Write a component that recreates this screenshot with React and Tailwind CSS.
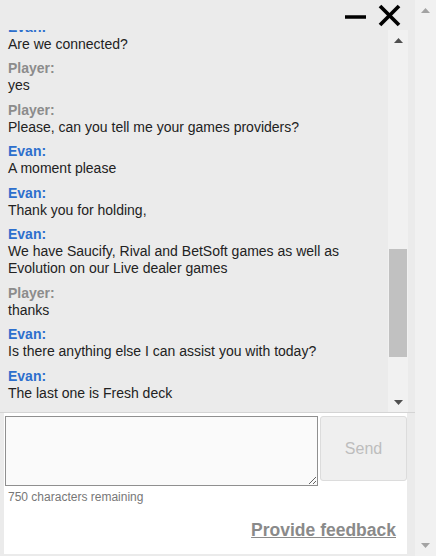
import { useState } from "react";

const messages = [
  { from: "Evan", text: "Are we connected?" },
  { from: "Player", text: "yes" },
  { from: "Player", text: "Please, can you tell me your games providers?" },
  { from: "Evan", text: "A moment please" },
  { from: "Evan", text: "Thank you for holding," },
  {
    from: "Evan",
    text: "We have Saucify, Rival and BetSoft games as well as Evolution on our Live dealer games",
  },
  { from: "Player", text: "thanks" },
  { from: "Evan", text: "Is there anything else I can assist you with today?" },
  { from: "Evan", text: "The last one is Fresh deck" },
  { from: "Evan", text: "Is there anything else?" },
];

function Arrow({ up = true, color = "#505050" }) {
  return (
    <svg width="9" height="5" viewBox="0 0 9 5">
      {up ? (
        <polygon points="0,5 9,5 4.5,0" fill={color} />
      ) : (
        <polygon points="0,0 9,0 4.5,5" fill={color} />
      )}
    </svg>
  );
}

export default function App() {
  const [draft, setDraft] = useState("");

  return (
    <div
      className="flex h-[556px] w-[436px] overflow-hidden bg-[#ebebeb] text-[#222]"
      style={{ fontFamily: '"Liberation Sans", Arial, sans-serif' }}
    >
      <div className="flex w-[415px] flex-col">
        {/* header */}
        <div className="flex h-[30px] items-start justify-end gap-[11px] pr-[14px] pt-[4px]">
          <svg width="23" height="23" viewBox="0 0 23 23">
            <line x1="1" y1="13" x2="22" y2="13" stroke="#000" strokeWidth="3.5" />
          </svg>
          <svg width="23" height="23" viewBox="0 0 23 23">
            <line x1="2" y1="2" x2="21" y2="21" stroke="#000" strokeWidth="3.8" />
            <line x1="21" y1="2" x2="2" y2="21" stroke="#000" strokeWidth="3.8" />
          </svg>
        </div>

        {/* messages */}
        <div className="flex h-[383px] border-b border-[#d4d4d4] pr-[7px]">
          <div className="flex-1 overflow-hidden pl-[8px] pr-[4px]">
            <div className="-mt-[11.5px] flex flex-col gap-[7.5px] text-[14px] leading-[17px]">
              {messages.map((m, i) => (
                <div key={i}>
                  <div
                    className={
                      m.from === "Evan"
                        ? "font-bold text-[#2d6fcd]"
                        : "font-bold text-[#8c8c8c]"
                    }
                  >
                    {m.from}:
                  </div>
                  <div>{m.text}</div>
                </div>
              ))}
            </div>
          </div>
          <div className="flex w-[20px] flex-col items-center bg-[#f1f1f1]">
            <div className="flex h-[20px] items-center justify-center">
              <Arrow up />
            </div>
            <div className="flex-1 w-full px-[1px] pt-[199px]">
              <div className="h-[108px] w-full bg-[#c1c1c1]" />
            </div>
            <div className="flex h-[20px] items-center justify-center">
              <Arrow up={false} />
            </div>
          </div>
        </div>

        {/* composer */}
        <div className="ml-[4px] w-[403px] flex-1 mb-[2px] bg-white">
          <div className="flex gap-[2px] pl-[1px] pt-[3px]">
            <textarea
              value={draft}
              onChange={(e) => setDraft(e.target.value)}
              className="h-[70px] w-[313px] border border-[#8f8f8f] bg-[#fafafa] text-[14px] outline-none"
            />
            <button className="h-[65px] w-[87px] rounded-[3px] border border-[#dcdcdc] bg-[#efefef] text-[16px] text-[#bdbdbd]">
              Send
            </button>
          </div>
          <div className="mt-[4px] pl-[4px] text-[12px] leading-[14px] text-[#777]">
            {750 - draft.length} characters remaining
          </div>
          <div className="mt-[16px] flex justify-end pr-[11px]">
            <a className="text-[17.5px] font-bold leading-[20px] text-[#8a8a8a] underline">
              Provide feedback
            </a>
          </div>
        </div>
      </div>

      {/* page scrollbar */}
      <div className="flex w-[21px] flex-col items-center justify-between bg-[#f1f1f1] py-[8px]">
        <Arrow up color="#a3a3a3" />
        <Arrow up={false} color="#a3a3a3" />
      </div>
    </div>
  );
}
